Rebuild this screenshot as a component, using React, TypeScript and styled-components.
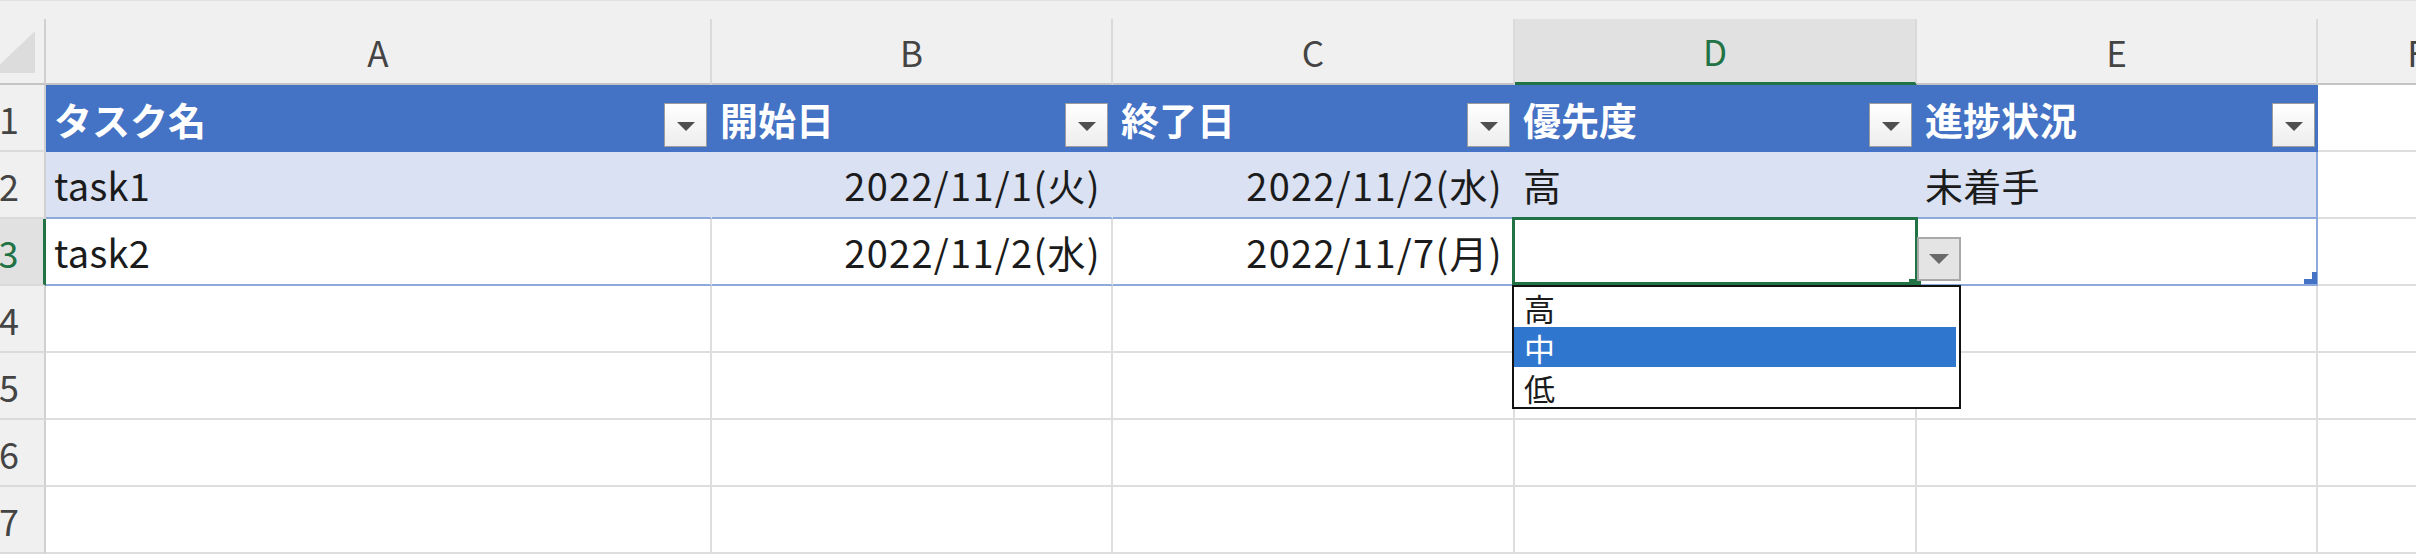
import React, { FC } from "react";
import styled, { createGlobalStyle } from "styled-components";

const GlobalStyle = createGlobalStyle`
  *, *::before, *::after {
    box-sizing: border-box;
  }

  html,
  body {
    margin: 0;
    padding: 0;
    background: #ffffff;
  }

  body {
    font-family: "Noto Sans CJK JP", "Noto Sans", sans-serif;
    color: #1b1b1b;
  }
`;

type Align = "left" | "right";

type Column = {
  key: string;
  width: number;
  align: Align;
};

const columns: Column[] = [
  { key: "A", width: 666, align: "left" },
  { key: "B", width: 401, align: "right" },
  { key: "C", width: 402, align: "right" },
  { key: "D", width: 402, align: "left" },
  { key: "E", width: 401, align: "left" },
];

const spareColumn = { key: "F", width: 200 };

const headings = ["タスク名", "開始日", "終了日", "優先度", "進捗状況"];

const tasks = [
  ["task1", "2022/11/1(火)", "2022/11/2(水)", "高", "未着手"],
  ["task2", "2022/11/2(水)", "2022/11/7(月)", "", ""],
];

const priorities = ["高", "中", "低"];

const emptyRows = [4, 5, 6, 7];

const activeRow = 1;
const activeCol = 3;

const template = [72, ...columns.map((c) => c.width), spareColumn.width]
  .map((w) => `${w}px`)
  .join(" ");

const DownArrow: FC<{ color: string; width: number; height: number }> = ({
  color,
  width,
  height,
}) => (
  <svg width={width} height={height} viewBox={`0 0 ${width} ${height}`}>
    <polygon points={`0,0 ${width},0 ${width / 2},${height}`} fill={color} />
  </svg>
);

const App: FC = () => {
  return (
    <>
      <GlobalStyle />
      <StyledSheet>
        <StyledTopStrip />
        <StyledGrid $template={template}>
          <StyledCorner>
            <svg width="44" height="42" viewBox="0 0 44 42">
              <polygon points="44,0 44,42 0,42" fill="#dcdcdc" />
            </svg>
          </StyledCorner>
          {columns.map((col, i) => (
            <StyledColHeader key={col.key} $selected={i === activeCol}>
              {col.key}
            </StyledColHeader>
          ))}
          <StyledColHeader>{spareColumn.key}</StyledColHeader>

          <StyledRowHeader>1</StyledRowHeader>
          {headings.map((heading, i) => (
            <StyledTableHead key={heading} $last={i === headings.length - 1}>
              <span>{heading}</span>
              <StyledFilterButton>
                <DownArrow color="#4f4f4f" width={18} height={9} />
              </StyledFilterButton>
            </StyledTableHead>
          ))}
          <StyledEmptyCell />

          {tasks.map((task, r) => (
            <React.Fragment key={task[0]}>
              <StyledRowHeader $selected={r === activeRow}>{r + 2}</StyledRowHeader>
              {task.map((value, c) => {
                const isActive = r === activeRow && c === activeCol;
                const isCorner = r === tasks.length - 1 && c === task.length - 1;
                return (
                  <StyledDataCell
                    key={columns[c].key}
                    $band={r % 2 === 0}
                    $align={columns[c].align}
                    $last={c === task.length - 1}
                    $raised={isActive}
                  >
                    {value}
                    {isActive && (
                      <>
                        <StyledSelection>
                          <StyledFillHandle />
                        </StyledSelection>
                        <StyledListButton>
                          <DownArrow color="#6a6a6a" width={20} height={10} />
                        </StyledListButton>
                        <StyledDropdown>
                          {priorities.map((p) => (
                            <StyledOption key={p} $highlighted={p === "中"}>
                              {p}
                            </StyledOption>
                          ))}
                        </StyledDropdown>
                      </>
                    )}
                    {isCorner && (
                      <StyledResizeMark width="13" height="12" viewBox="0 0 13 12">
                        <polygon points="13,0 13,12 0,12 0,7 8,7 8,0" fill="#4472c4" />
                      </StyledResizeMark>
                    )}
                  </StyledDataCell>
                );
              })}
              <StyledEmptyCell />
            </React.Fragment>
          ))}

          {emptyRows.map((n) => (
            <React.Fragment key={n}>
              <StyledRowHeader>{n}</StyledRowHeader>
              {columns.map((col) => (
                <StyledEmptyCell key={col.key} />
              ))}
              <StyledEmptyCell />
            </React.Fragment>
          ))}
        </StyledGrid>
      </StyledSheet>
    </>
  );
};

const StyledSheet = styled.div`
  width: 2416px;
  height: 556px;
  overflow: hidden;
  background: #ffffff;
  display: flex;
  flex-direction: column;
`;

const StyledTopStrip = styled.div`
  height: 19px;
  flex: none;
  background: #f0f0f0;
  border-top: 1px solid #e0e0e0;
`;

const StyledGrid = styled.div<{ $template: string }>`
  display: grid;
  grid-template-columns: ${(p) => p.$template};
  grid-template-rows: 66px;
  grid-auto-rows: 67px;
  margin-left: -26px;
`;

const StyledCorner = styled.div`
  background: #f0f0f0;
  border-right: 2px solid #d0d0d0;
  border-bottom: 2px solid #c4c4c4;
  display: flex;
  justify-content: flex-end;
  align-items: flex-end;
  padding: 0 9px 10px 0;
`;

const StyledColHeader = styled.div<{ $selected?: boolean }>`
  background: ${(p) => (p.$selected ? "#e1e1e1" : "#f0f0f0")};
  color: ${(p) => (p.$selected ? "#217346" : "#444444")};
  border-right: 2px solid #dadada;
  border-bottom: ${(p) => (p.$selected ? "3px solid #217346" : "2px solid #c4c4c4")};
  display: flex;
  align-items: center;
  justify-content: center;
  font-size: 35px;
  line-height: 1;
`;

const StyledRowHeader = styled.div<{ $selected?: boolean }>`
  background: ${(p) => (p.$selected ? "#e1e1e1" : "#f0f0f0")};
  color: ${(p) => (p.$selected ? "#217346" : "#444444")};
  border-right: ${(p) => (p.$selected ? "3px solid #217346" : "2px solid #d0d0d0")};
  border-bottom: 2px solid #dadada;
  display: flex;
  align-items: center;
  justify-content: center;
  font-size: 36px;
  line-height: 1;
`;

const StyledTableHead = styled.div<{ $last?: boolean }>`
  background: #4472c4;
  color: #ffffff;
  font-weight: 700;
  font-size: 38px;
  line-height: 1;
  display: flex;
  align-items: center;
  justify-content: space-between;
  padding: 0 ${(p) => (p.$last ? 1 : 3)}px 0 8px;
  border-right: 2px solid #4472c4;
`;

const StyledFilterButton = styled.span`
  flex: none;
  align-self: flex-end;
  width: 43px;
  height: 44px;
  margin-bottom: 5px;
  background: linear-gradient(#ffffff, #ededed);
  border: 1px solid #9d9d9d;
  display: flex;
  align-items: center;
  justify-content: center;
  padding-top: 3px;
`;

const StyledDataCell = styled.div<{
  $band?: boolean;
  $align: Align;
  $last?: boolean;
  $raised?: boolean;
}>`
  position: relative;
  z-index: ${(p) => (p.$raised ? 3 : "auto")};
  background: ${(p) => (p.$band ? "#d9e1f2" : "#ffffff")};
  border-bottom: 2px solid #8ea9db;
  border-right: 2px solid
    ${(p) => (p.$last ? "#8ea9db" : p.$band ? "#d9e1f2" : "#dedede")};
  display: flex;
  align-items: center;
  justify-content: ${(p) => (p.$align === "right" ? "flex-end" : "flex-start")};
  padding: 0 ${(p) => (p.$align === "right" ? 10 : 8)}px 0 8px;
  font-size: 38px;
  line-height: 1;
  letter-spacing: ${(p) => (p.$align === "right" ? "1.3px" : "0.3px")};
  white-space: nowrap;
`;

const StyledEmptyCell = styled.div`
  background: #ffffff;
  border-right: 2px solid #dedede;
  border-bottom: 2px solid #dedede;
`;

const StyledSelection = styled.div`
  position: absolute;
  top: -2px;
  left: -3px;
  right: -3px;
  bottom: -1px;
  border: 3px solid #217346;
  pointer-events: none;
`;

const StyledFillHandle = styled.div`
  position: absolute;
  right: -6px;
  bottom: -4px;
  width: 12px;
  height: 7px;
  background: #217346;
`;

const StyledListButton = styled.div`
  position: absolute;
  top: 18px;
  left: 402px;
  width: 44px;
  height: 44px;
  background: #e4e4e4;
  border: 2px solid #a9a9a9;
  display: flex;
  align-items: center;
  justify-content: center;
`;

const StyledDropdown = styled.div`
  position: absolute;
  top: 66px;
  left: -3px;
  width: 449px;
  height: 124px;
  background: #ffffff;
  border: 2px solid #121212;
  display: flex;
  flex-direction: column;
`;

const StyledOption = styled.div<{ $highlighted?: boolean }>`
  height: 40px;
  margin-right: 3px;
  padding-left: 10px;
  display: flex;
  align-items: center;
  font-size: 31px;
  line-height: 1;
  background: ${(p) => (p.$highlighted ? "#2f76cf" : "transparent")};
  color: ${(p) => (p.$highlighted ? "#ffffff" : "#1b1b1b")};
`;

const StyledResizeMark = styled.svg`
  position: absolute;
  right: -1px;
  bottom: 0;
`;

export default App;
